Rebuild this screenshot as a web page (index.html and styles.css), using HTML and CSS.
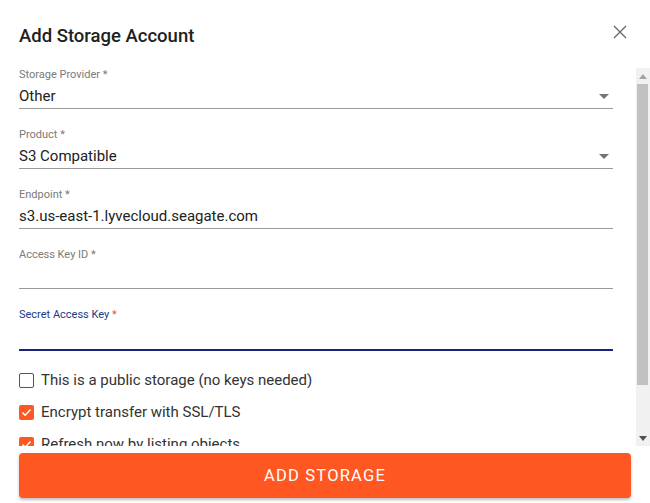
FILE: index.html
```html
<!DOCTYPE html>
<html>
<head>
<meta charset="utf-8">
<link rel="stylesheet" href="styles.css">
</head>
<body>
<div class="dialog">
  <div class="header">
    <h1 class="title">Add Storage Account</h1>
    <button class="close" aria-label="Close">
      <svg width="14" height="14" viewBox="0 0 14 14"><path d="M1 1 L13 13 M13 1 L1 13" stroke="#6b6b6b" stroke-width="1.4" fill="none"/></svg>
    </button>
  </div>
  <div class="scroll">
    <div class="content">
      <div class="field">
        <div class="label">Storage Provider *</div>
        <div class="control">
          <span class="value">Other</span>
          <svg class="caret" width="10" height="5" viewBox="0 0 10 5"><path d="M0 0 H10 L5 5 Z" fill="#757575"/></svg>
        </div>
      </div>
      <div class="field">
        <div class="label">Product *</div>
        <div class="control">
          <span class="value">S3 Compatible</span>
          <svg class="caret" width="10" height="5" viewBox="0 0 10 5"><path d="M0 0 H10 L5 5 Z" fill="#757575"/></svg>
        </div>
      </div>
      <div class="field">
        <div class="label">Endpoint *</div>
        <div class="control">
          <span class="value">s3.us-east-1.lyvecloud.seagate.com</span>
        </div>
      </div>
      <div class="field">
        <div class="label">Access Key ID *</div>
        <div class="control">
          <span class="value"></span>
        </div>
      </div>
      <div class="field focused">
        <div class="label">Secret Access Key <span class="req">*</span></div>
        <div class="control">
          <span class="value"></span>
        </div>
      </div>
      <div class="checks">
        <label class="check">
          <span class="box"></span>
          <span class="check-text">This is a public storage (no keys needed)</span>
        </label>
        <label class="check">
          <span class="box on"><svg width="15" height="15" viewBox="0 0 15 15"><path d="M3.5 7.6 L6.2 10.2 L11.5 4.6" stroke="#fff" stroke-width="1.5" fill="none"/></svg></span>
          <span class="check-text">Encrypt transfer with SSL/TLS</span>
        </label>
        <label class="check">
          <span class="box on"><svg width="15" height="15" viewBox="0 0 15 15"><path d="M3.5 7.6 L6.2 10.2 L11.5 4.6" stroke="#fff" stroke-width="1.5" fill="none"/></svg></span>
          <span class="check-text">Refresh now by listing objects</span>
        </label>
      </div>
    </div>
    <div class="scrollbar">
      <div class="sb-btn"><svg width="8" height="5" viewBox="0 0 8 5"><path d="M0 5 L4 0 L8 5 Z" fill="#a3a3a3"/></svg></div>
      <div class="sb-track"><div class="sb-thumb"></div></div>
      <div class="sb-btn"><svg width="8" height="5" viewBox="0 0 8 5"><path d="M0 0 L8 0 L4 5 Z" fill="#505050"/></svg></div>
    </div>
  </div>
  <div class="footer">
    <button class="primary">ADD STORAGE</button>
  </div>
</div>
</body>
</html>
```
FILE: styles.css
```css
* { box-sizing: border-box; }
html, body {
  margin: 0;
  padding: 0;
  background: #fff;
  font-family: Roboto, "Liberation Sans", sans-serif;
  color: #212121;
}
.dialog {
  width: 650px;
  height: 503px;
  display: flex;
  flex-direction: column;
}
.header {
  height: 68px;
  display: flex;
  justify-content: space-between;
  align-items: flex-start;
  padding: 0 23px 0 19px;
}
.title {
  margin: 24px 0 0;
  font-size: 18.5px;
  line-height: 24px;
  font-weight: 500;
  color: #212121;
}
.close {
  margin-top: 25px;
  padding: 0;
  border: 0;
  background: none;
  width: 14px;
  height: 14px;
  display: flex;
}
.scroll {
  height: 378px;
  display: flex;
  overflow: hidden;
}
.content {
  flex: 1;
  padding: 0 23px 0 19px;
  overflow: hidden;
}
.field {
  padding-bottom: 19px;
}
.label {
  font-size: 11px;
  line-height: 14px;
  color: #7a7a7a;
}
.control {
  display: flex;
  align-items: center;
  justify-content: space-between;
  padding: 4px 0 2px;
  border-bottom: 1px solid #9a9a9a;
}
.value {
  font-size: 15px;
  line-height: 20px;
  height: 20px;
  color: #212121;
}
.caret {
  margin-right: 4px;
}
.focused .label {
  color: #1b3a8c;
}
.focused .req {
  color: #f4511e;
}
.focused .control {
  padding-bottom: 3px;
  border-bottom: 2px solid #1a237e;
}
.focused {
  padding-bottom: 18px;
}
.checks {
  display: flex;
  flex-direction: column;
  gap: 10px;
}
.check {
  display: flex;
  align-items: center;
  gap: 7px;
  height: 22px;
}
.box {
  width: 15px;
  height: 15px;
  border: 1.5px solid #555;
  border-radius: 2px;
  display: flex;
  flex-shrink: 0;
}
.box.on {
  border: 0;
  background: #ff5722;
}
.check-text {
  font-size: 15px;
  line-height: 20px;
  color: #333;
}
.scrollbar {
  width: 14px;
  background: #f1f1f1;
  display: flex;
  flex-direction: column;
}
.sb-btn {
  height: 16px;
  display: flex;
  align-items: center;
  justify-content: center;
}
.sb-track {
  flex: 1;
  padding: 0 2px 0 1px;
}
.sb-thumb {
  height: 301px;
  background: #c1c1c1;
}
.footer {
  padding: 7px 19px 0;
}
.primary {
  width: 100%;
  height: 45px;
  border: 0;
  border-radius: 4px;
  background: #ff5722;
  color: #fff;
  font-family: Roboto, "Liberation Sans", sans-serif;
  font-size: 16.5px;
  font-weight: 400;
  letter-spacing: 1.2px;
  box-shadow: 0 2px 3px rgba(0,0,0,0.25);
}
```
